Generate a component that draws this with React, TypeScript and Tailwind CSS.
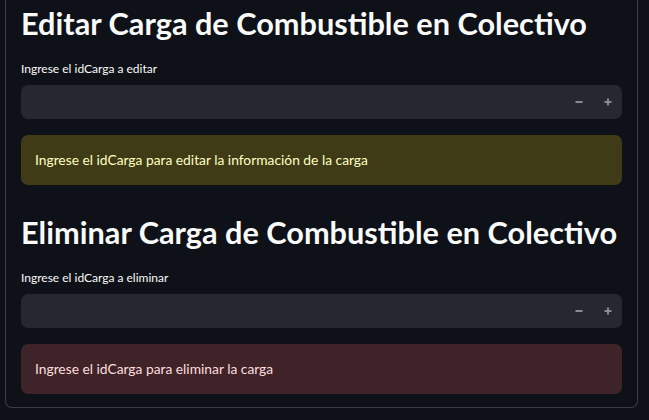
import React from 'react';

const MinusIcon: React.FC = () => (
  <svg width="8" height="8" viewBox="0 0 8 8" className="text-[#878a96]">
    <path d="M0.5 4h7" stroke="currentColor" strokeWidth={2} />
  </svg>
);

const PlusIcon: React.FC = () => (
  <svg width="8" height="8" viewBox="0 0 8 8" className="text-[#878a96]">
    <path d="M0.5 4h7M4 0.5v7" stroke="currentColor" strokeWidth={2} />
  </svg>
);

const NumberInput: React.FC = () => (
  <div className="flex h-[34px] w-full items-center rounded-[7px] bg-[#262730]">
    <input className="h-full min-w-0 flex-1 bg-transparent px-3 text-[13.8px] text-[#fafafa] outline-none" />
    <button className="flex h-full w-[29px] items-center justify-center">
      <MinusIcon />
    </button>
    <button className="flex h-full w-[29px] items-center justify-center">
      <PlusIcon />
    </button>
  </div>
);

interface SectionProps {
  title: string;
  label: string;
  message: string;
  tone: 'warning' | 'error';
}

const Section: React.FC<SectionProps> = ({ title, label, message, tone }) => (
  <section className="flex flex-col">
    <h2 className="h-[37px] text-[30.7px] font-bold leading-[37px] text-[#fafafa]">{title}</h2>
    <label className="mt-[19px] h-[16px] text-[12px] leading-[16px] text-[#fafafa]">{label}</label>
    <div className="mt-[8px]">
      <NumberInput />
    </div>
    <div
      className={
        tone === 'warning'
          ? 'mt-4 flex h-[50px] items-center rounded-[7px] bg-[#3e3b16] px-[14px] text-[13.8px] text-[#ffffc2]'
          : 'mt-4 flex h-[50px] items-center rounded-[7px] bg-[#3e2328] px-[14px] text-[13.8px] text-[#ffdede]'
      }
    >
      {message}
    </div>
  </section>
);

export default function App() {
  return (
    <div className="h-[420px] w-[649px] overflow-hidden bg-[#0e1117] font-['Lato',sans-serif]">
      <div className="ml-[5px] w-[633px] rounded-b-[7px] border-x border-b border-[#3b3d44] px-[15px] pb-[13px] pt-[5px]">
        <div className="flex flex-col gap-[29px]">
          <Section
            title="Editar Carga de Combustible en Colectivo"
            label="Ingrese el idCarga a editar"
            message="Ingrese el idCarga para editar la información de la carga"
            tone="warning"
          />
          <Section
            title="Eliminar Carga de Combustible en Colectivo"
            label="Ingrese el idCarga a eliminar"
            message="Ingrese el idCarga para eliminar la carga"
            tone="error"
          />
        </div>
      </div>
    </div>
  );
}
